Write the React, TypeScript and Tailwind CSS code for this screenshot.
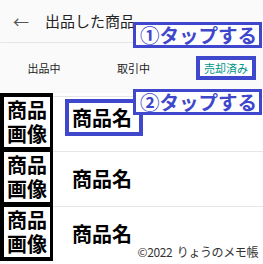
const jp = { fontFamily: '"Noto Sans CJK JP", "Noto Sans", sans-serif' };

function ImageCell() {
  return (
    <div className="w-[53px] shrink-0 bg-black pl-[4px] pr-[3px] pt-[1px] pb-[4px]">
      <div className="flex h-[50px] flex-col items-center justify-center bg-white text-[20px] font-bold leading-[24px] text-black">
        <span>商品</span>
        <span>画像</span>
      </div>
    </div>
  );
}

function Row({ first = false }: { first?: boolean }) {
  return (
    <div className="flex h-[55px]">
      <ImageCell />
      {first ? (
        <div className="flex-1 border-t border-[#e6e6e6] pl-[12px] pt-[2px]">
          <span className="inline-block border-4 border-[#3f48cc] pl-[3px] pr-[7px] text-[20px] font-bold leading-[29px] text-black">
            商品名
          </span>
        </div>
      ) : (
        <div className="flex flex-1 items-center border-t border-[#e6e6e6] pl-[19px] text-[20px] font-bold text-black">
          商品名
        </div>
      )}
    </div>
  );
}

function Note({ label, top }: { label: string; top: string }) {
  return (
    <div
      className={`absolute left-[133px] ${top} whitespace-nowrap border-[3px] border-[#3f48cc] bg-white pl-[4px] pr-[2px] text-[19.5px] font-bold leading-[20px] text-[#3f48cc]`}
    >
      {label}
    </div>
  );
}

export default function App() {
  return (
    <div className="relative h-[264px] w-[263px] overflow-hidden bg-white" style={jp}>
      {/* header */}
      <div className="flex h-[42px] items-center bg-[#fafafa] shadow-[0_1px_2px_rgba(0,0,0,0.15)]">
        <span className="ml-[13px] w-[32px] text-[16px] text-[#555]">←</span>
        <span className="text-[15px] text-[#222]">出品した商品</span>
      </div>

      {/* tabs */}
      <div className="mt-[1px] flex h-[50px] items-center bg-[#fafafa] text-[11px] text-[#222]">
        <div className="w-[88px] text-center">出品中</div>
        <div className="w-[91px] text-center">取引中</div>
        <div className="pl-[17px]">
          <span className="inline-block whitespace-nowrap border-4 border-[#3f48cc] bg-white px-[4px] leading-[16px] text-[#009688]">
            売却済み
          </span>
        </div>
      </div>

      {/* list */}
      <div className="flex h-[3px]">
        <div className="w-[53px] bg-black" />
      </div>
      <Row first />
      <Row />
      <Row />

      <Note label="①タップする" top="top-[22px]" />
      <Note label="②タップする" top="top-[89px]" />

      <div className="absolute right-[5px] top-[243px] whitespace-nowrap text-[12px] tracking-[-0.4px] text-[#333]">
        ©2022&nbsp;&nbsp;りょうのメモ帳
      </div>
    </div>
  );
}
